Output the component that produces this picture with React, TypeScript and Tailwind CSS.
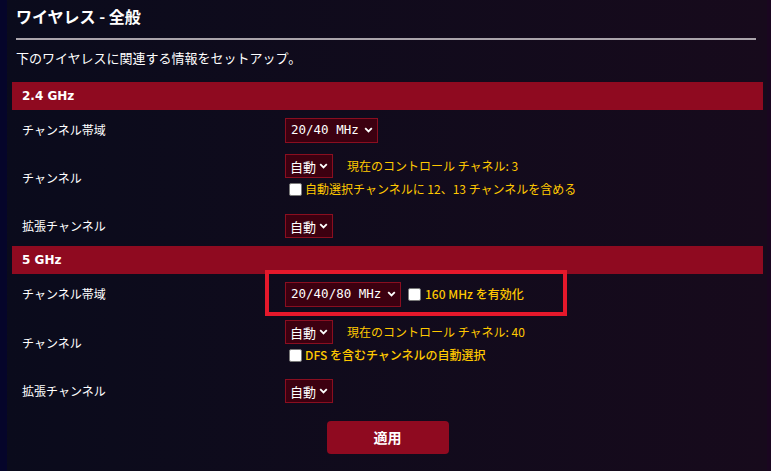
import React from "react";

const JP = { fontFamily: "'Noto Sans CJK JP', 'Noto Sans', sans-serif" };
const MONO = { fontFamily: "'DejaVu Sans Mono', 'Liberation Mono', monospace" };
const VERD = { fontFamily: "'DejaVu Sans', 'Noto Sans CJK JP', sans-serif" };

function Chevron() {
  return (
    <svg width="9" height="6" viewBox="0 0 9 6" className="shrink-0">
      <path d="M1.2 1.2 L4.5 4.5 L7.8 1.2" stroke="#ffffff" strokeWidth="1.8" fill="none" />
    </svg>
  );
}

function Select({ text, mono, w, h = 24 }: { text: string; mono?: boolean; w: number; h?: number }) {
  return (
    <div
      className="flex items-center justify-between border border-[#8a0e20] bg-[#3c0010] pl-[4px] pr-[4px] text-white shrink-0"
      style={{ width: w, height: h }}
    >
      {mono ? (
        <span className="text-[12.5px] leading-none pl-[1px]" style={MONO}>{text}</span>
      ) : (
        <span className="text-[13px] leading-none" style={JP}>{text}</span>
      )}
      <Chevron />
    </div>
  );
}

function Check() {
  return <div className="w-[13px] h-[13px] bg-white border border-[#7a7a7a] rounded-[2px] shrink-0" />;
}

function Bar({ label }: { label: string }) {
  return (
    <div className="h-[28px] bg-[#8f0a20] flex items-center pl-[10px]">
      <span className="text-white text-[12px] font-bold" style={VERD}>{label}</span>
    </div>
  );
}

function Label({ children }: { children: React.ReactNode }) {
  return (
    <div className="w-[273px] shrink-0 pl-[10px] text-[12px] text-white" style={JP}>
      {children}
    </div>
  );
}

export default function App() {
  return (
    <div className="flex w-[771px] h-[471px] overflow-hidden">
      <div className="w-[7px] bg-[#05052a] shrink-0" />
      <div className="flex-1 bg-linear-to-r from-[#0a0b1c] to-[#170a1c] relative">
        <div className="pl-[9px] pt-[6px] h-[26px] text-[16px] leading-[20px] font-bold text-white" style={JP}>
          ワイヤレス - 全般
        </div>
        <div className="ml-[9px] mt-[12px] w-[740px] h-[2px] bg-[#aaa4ab]" />
        <div className="pl-[9px] mt-[8px] h-[20px] text-[13px] leading-[20px] text-white" style={JP}>
          下のワイヤレスに関連する情報をセットアップ。
        </div>
        <div className="ml-[5px] mt-[14px] w-[751px]">
          <Bar label="2.4 GHz" />
          <div className="h-[40px] flex items-center">
            <Label>チャンネル帯域</Label>
            <Select text="20/40 MHz" mono w={93} h={25} />
          </div>
          <div className="h-[56px] flex items-center">
            <Label>チャンネル</Label>
            <div className="self-start pt-[4px] flex flex-col">
              <div className="flex items-center">
                <Select text="自動" w={48} />
                <span className="ml-[14px] text-[12px] text-[#ffc800]" style={JP}>現在のコントロール チャネル: 3</span>
              </div>
              <div className="mt-[3px] h-[16px] flex items-center pl-[4px]">
                <Check />
                <span className="ml-[3px] text-[12px] leading-[16px] text-[#ffc800]" style={JP}>
                  自動選択チャンネルに 12、13 チャンネルを含める
                </span>
              </div>
            </div>
          </div>
          <div className="h-[40px] flex items-center">
            <Label>拡張チャンネル</Label>
            <Select text="自動" w={48} />
          </div>
          <Bar label="5 GHz" />
          <div className="h-[40px] flex items-center">
            <Label>チャンネル帯域</Label>
            <Select text="20/40/80 MHz" mono w={116} h={25} />
            <div className="ml-[7px] flex items-center">
              <Check />
              <span className="ml-[4px] text-[12px] font-medium text-[#ffc800]" style={JP}>160 MHz を有効化</span>
            </div>
          </div>
          <div className="h-[57px] flex items-center">
            <Label>チャンネル</Label>
            <div className="self-start pt-[6px] flex flex-col">
              <div className="flex items-center">
                <Select text="自動" w={48} />
                <span className="ml-[14px] text-[12px] text-[#ffc800]" style={JP}>現在のコントロール チャネル: 40</span>
              </div>
              <div className="mt-[3px] h-[16px] flex items-center pl-[4px]">
                <Check />
                <span className="ml-[3px] text-[12px] leading-[16px] font-medium text-[#ffc800]" style={JP}>
                  DFS を含むチャンネルの自動選択
                </span>
              </div>
            </div>
          </div>
          <div className="h-[40px] flex items-center">
            <Label>拡張チャンネル</Label>
            <Select text="自動" w={48} />
          </div>
          <div className="mt-[10px] flex justify-center">
            <button
              className="w-[122px] h-[33px] rounded-[4px] bg-[#8f0a20] text-white text-[14px] font-bold"
              style={JP}
            >
              適用
            </button>
          </div>
        </div>
        <div className="absolute left-[258px] top-[270px] w-[302px] h-[46px] border-[4px] border-[#e5182b]" />
      </div>
      <div className="w-[4px] bg-[#1a0620] shrink-0" />
    </div>
  );
}
